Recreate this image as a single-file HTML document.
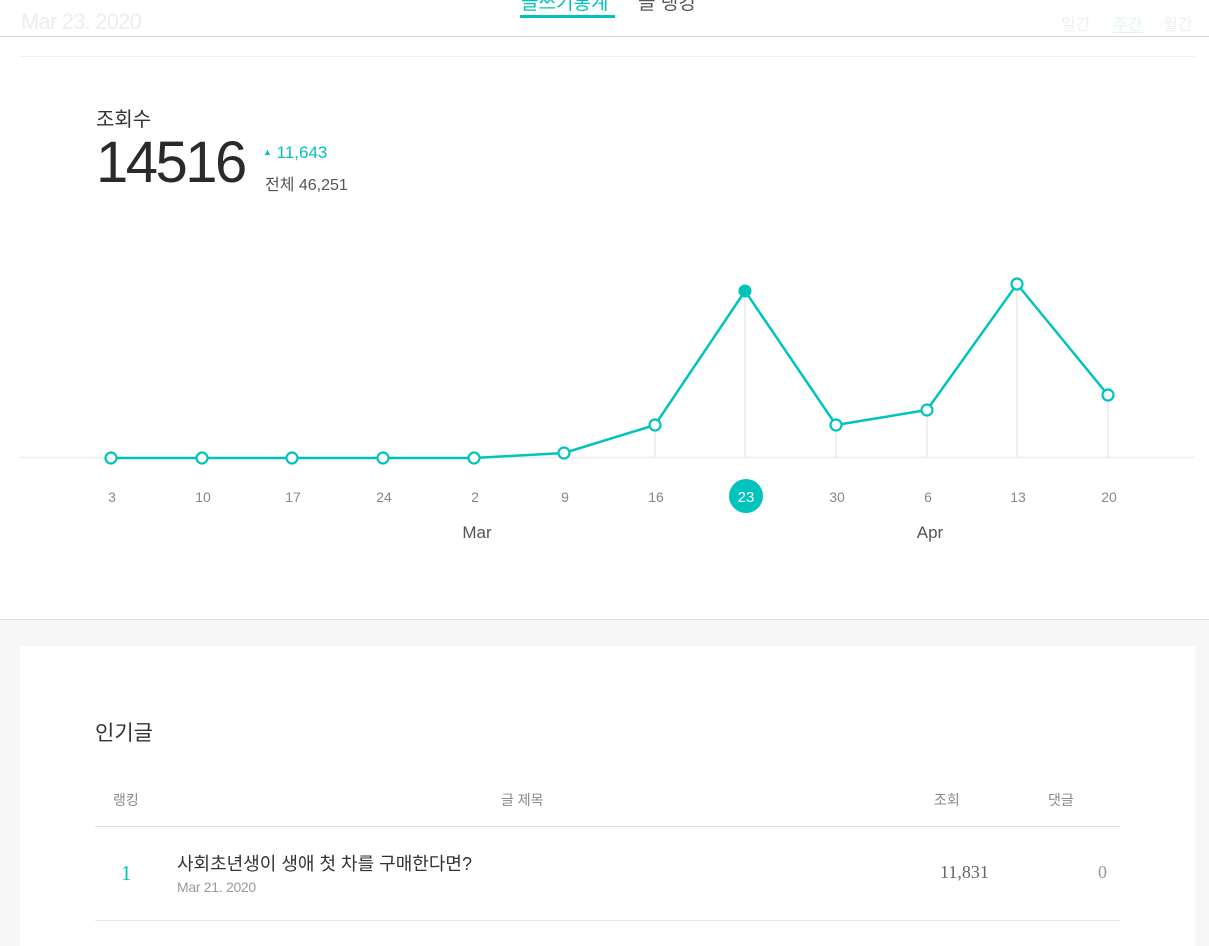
<!DOCTYPE html>
<html><head><meta charset="utf-8"><style>
*{margin:0;padding:0;box-sizing:border-box}
body{width:1209px;height:939px;overflow:hidden;background:#f7f7f7;font-family:"Liberation Sans","Noto Sans CJK KR",sans-serif;position:relative}
.abs{position:absolute;white-space:nowrap}
.top{position:absolute;left:0;top:0;width:1209px;height:620px;background:#fff;border-bottom:1px solid #dedede}
</style></head><body>
<div class="top"></div>
<div class="abs" style="left:0;top:36px;width:1209px;height:1px;background:#d8d8d8"></div>
<div class="abs" style="left:20px;top:56px;width:1175px;height:1px;background:#f0f0f0"></div>
<div class="abs" style="left:21px;top:9px;font-size:22px;color:#ededed;letter-spacing:-0.8px">Mar 23. 2020</div>
<div class="abs" style="left:521px;top:-12px;font-size:19px;color:#00c3bd">글쓰기통계</div>
<div class="abs" style="left:520px;top:15px;width:95px;height:3px;background:#00c3bd"></div>
<div class="abs" style="left:638px;top:-12px;font-size:19px;color:#555">글 랭킹</div>
<div class="abs" style="left:1061px;top:11px;font-size:16px;color:#f0f0f0">일간</div>
<div class="abs" style="left:1113px;top:11px;font-size:16px;color:#e2f6f5">주간</div>
<div class="abs" style="left:1113px;top:32px;width:30px;height:1px;background:#e0f5f4"></div>
<div class="abs" style="left:1163px;top:11px;font-size:16px;color:#f0f0f0">월간</div>

<div class="abs" style="left:96px;top:103px;font-size:20px;color:#333">조회수</div>
<div class="abs" style="left:96px;top:134px;font-size:58px;color:#2a2a2a;letter-spacing:-2.5px;line-height:1">14516</div>
<div class="abs" style="left:263px;top:143px;font-size:17px;color:#00c3bd"><span style="font-size:9px;vertical-align:3px">▲</span> 11,643</div>
<div class="abs" style="left:265px;top:171px;font-size:16px;color:#555">전체 46,251</div>

<svg class="abs" style="left:0;top:0" width="1209" height="620">
<line x1="20" y1="457.5" x2="1195" y2="457.5" stroke="#ececec" stroke-width="1.5"/>
<g stroke="#e4e4e4" stroke-width="1.2">
<line x1="655" y1="425" x2="655" y2="457"/><line x1="745" y1="291" x2="745" y2="457"/><line x1="836" y1="425" x2="836" y2="457"/><line x1="927" y1="410" x2="927" y2="457"/><line x1="1017" y1="284" x2="1017" y2="457"/><line x1="1108" y1="395" x2="1108" y2="457"/>
</g>
<polyline fill="none" stroke="#00c3bd" stroke-width="2.5" points="111,458 202,458 292,458 383,458 474,458 564,453 655,425 745,291 836,425 927,410 1017,284 1108,395"/>
<g fill="#fff" stroke="#00c3bd" stroke-width="2.2">
<circle cx="111" cy="458" r="5.5"/><circle cx="202" cy="458" r="5.5"/><circle cx="292" cy="458" r="5.5"/><circle cx="383" cy="458" r="5.5"/><circle cx="474" cy="458" r="5.5"/><circle cx="564" cy="453" r="5.5"/><circle cx="655" cy="425" r="5.5"/><circle cx="836" cy="425" r="5.5"/><circle cx="927" cy="410" r="5.5"/><circle cx="1017" cy="284" r="5.5"/><circle cx="1108" cy="395" r="5.5"/>
</g>
<circle cx="745" cy="291" r="6.5" fill="#00c3bd"/>
<circle cx="746" cy="496" r="17" fill="#00c3bd"/>
<g font-family="Liberation Sans,sans-serif" font-size="14" fill="#888" text-anchor="middle">
<text x="112" y="502">3</text><text x="203" y="502">10</text><text x="293" y="502">17</text><text x="384" y="502">24</text><text x="475" y="502">2</text><text x="565" y="502">9</text><text x="656" y="502">16</text><text x="746" y="502" fill="#fff" font-size="15">23</text><text x="837" y="502">30</text><text x="928" y="502">6</text><text x="1018" y="502">13</text><text x="1109" y="502">20</text>
<text x="477" y="538" font-size="17" fill="#555">Mar</text><text x="930" y="538" font-size="17" fill="#555">Apr</text>
</g>
</svg>

<div class="abs" style="left:20px;top:646px;width:1175px;height:300px;background:#fff"></div>
<div class="abs" style="left:95px;top:717px;font-size:21px;color:#333">인기글</div>
<div class="abs" style="left:113px;top:790px;font-size:14px;color:#888">랭킹</div>
<div class="abs" style="left:501px;top:790px;font-size:14px;color:#888">글 제목</div>
<div class="abs" style="left:934px;top:790px;font-size:14px;color:#888">조회</div>
<div class="abs" style="left:1048px;top:790px;font-size:14px;color:#888">댓글</div>
<div class="abs" style="left:95px;top:826px;width:1025px;height:1px;background:#e0e0e0"></div>
<div class="abs" style="left:121px;top:861px;font-size:21px;color:#00c3bd;font-family:'Liberation Serif',serif">1</div>
<div class="abs" style="left:177px;top:850px;font-size:18px;color:#333">사회초년생이 생애 첫 차를 구매한다면?</div>
<div class="abs" style="left:177px;top:879px;font-size:14px;color:#999;letter-spacing:-0.3px">Mar 21. 2020</div>
<div class="abs" style="left:940px;top:862px;font-size:18px;color:#666;font-family:'Liberation Serif',serif">11,831</div>
<div class="abs" style="left:1098px;top:862px;font-size:18px;color:#999;font-family:'Liberation Serif',serif">0</div>
<div class="abs" style="left:95px;top:920px;width:1025px;height:1px;background:#e8e8e8"></div>
</body></html>
